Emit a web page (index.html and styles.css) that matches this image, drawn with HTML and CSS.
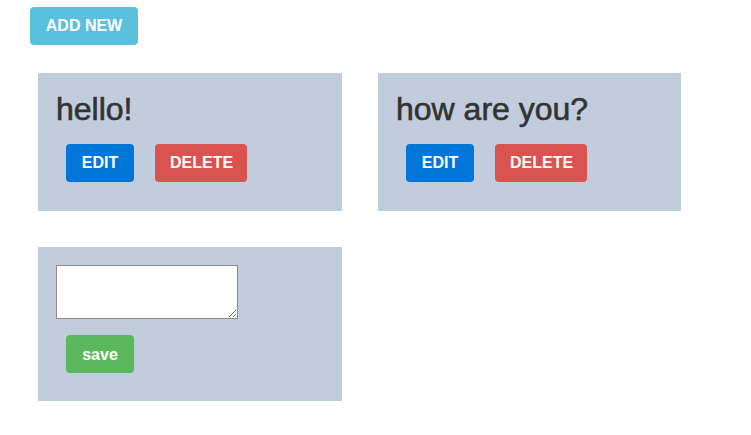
FILE: index.html
```html
<!DOCTYPE html>
<html>
<head>
<meta charset="utf-8">
<link rel="stylesheet" href="styles.css">
</head>
<body>
<div class="page">
  <button class="btn btn-info add">ADD NEW</button>
  <div class="notes">
    <div class="note">
      <h1 class="note-title">hello!</h1>
      <div class="actions">
        <button class="btn btn-primary">EDIT</button>
        <button class="btn btn-danger">DELETE</button>
      </div>
    </div>
    <div class="note">
      <h1 class="note-title">how are you?</h1>
      <div class="actions">
        <button class="btn btn-primary">EDIT</button>
        <button class="btn btn-danger">DELETE</button>
      </div>
    </div>
    <div class="note note-form">
      <textarea class="note-input"></textarea>
      <div class="actions">
        <button class="btn btn-success">save</button>
      </div>
    </div>
  </div>
</div>
</body>
</html>
```
FILE: styles.css
```css
* { box-sizing: border-box; }
body {
  margin: 0;
  background: #fff;
  font-family: "Liberation Sans", Arial, Helvetica, sans-serif;
}
.page {
  padding: 7px 0 0 30px;
}
.btn {
  display: inline-block;
  border: none;
  border-radius: 4px;
  padding: 10px 15px;
  height: 38px;
  font-family: "Liberation Sans", Arial, sans-serif;
  font-size: 16px;
  font-weight: bold;
  line-height: 18px;
  color: #fff;
  cursor: pointer;
}
.btn-info { background: #5bc0de; }
.btn-primary { background: #0275d8; }
.btn-danger { background: #d9534f; }
.btn-success { background: #5cb85c; }
.add {
  width: 108px;
  display: block;
}
.notes {
  margin: 28px 0 0 8px;
  display: grid;
  grid-template-columns: 304px 303px;
  gap: 36px;
  align-items: start;
}
.note {
  background: #c1ccdc;
  padding: 19px 18px 29px 18px;
}
.note-title {
  margin: 0 0 17px 0;
  font-size: 32px;
  font-weight: 500;
  line-height: 1.1;
  color: #333;
  -webkit-text-stroke: 0.6px #333;
}
.actions {
  display: flex;
  gap: 21px;
  padding-left: 10px;
}
.actions .btn-primary { width: 68px; }
.actions .btn-danger { width: 92px; }
.actions .btn-success { width: 68px; padding-top: 11px; padding-bottom: 9px; }
.note-form {
  padding: 18px 18px 28px 18px;
}
.note-input {
  display: block;
  width: 182px;
  height: 54px;
  margin: 0 0 16px 0;
  border: 1px solid #8a8a8a;
  background: #fff;
  padding: 2px;
}
```
